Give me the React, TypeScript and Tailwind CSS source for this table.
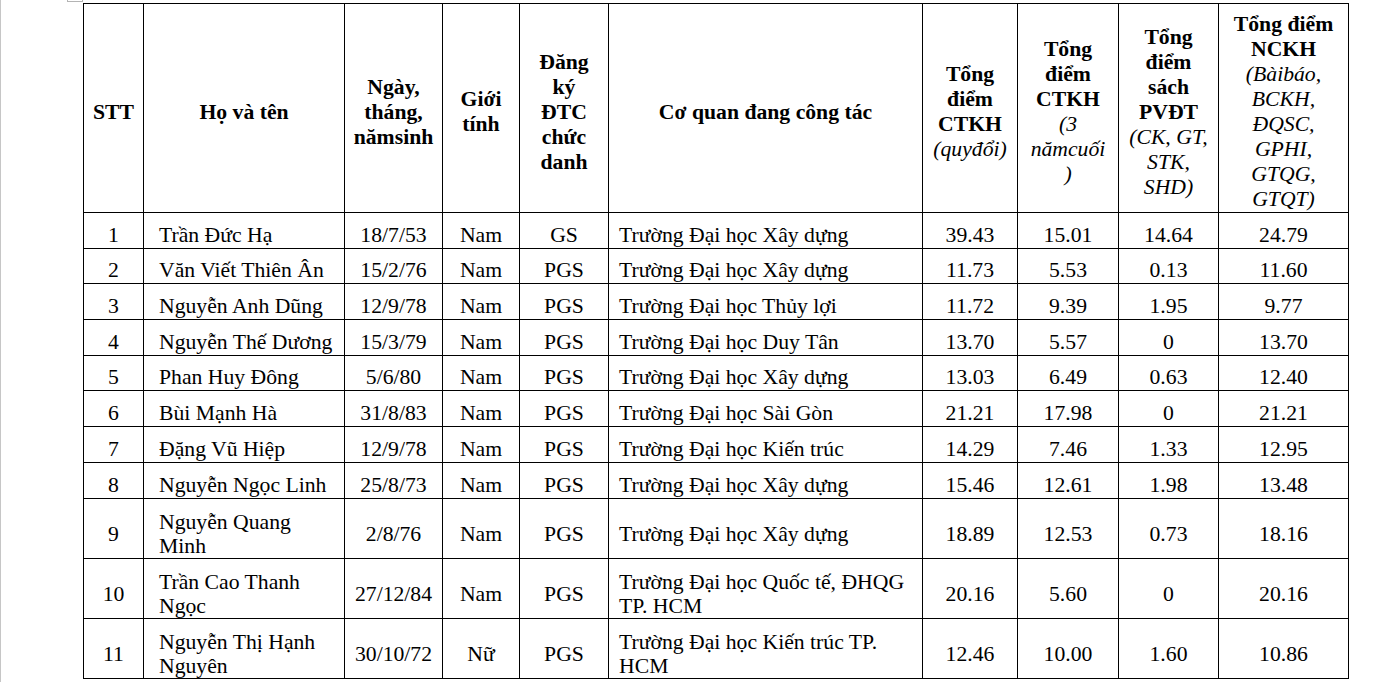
import React from "react";

type Row = {
  stt: string;
  name: string[];
  dob: string;
  gender: string;
  title: string;
  org: string[];
  ctkh: string;
  ctkh3: string;
  pvdt: string;
  nckh: string;
};

const rows: Row[] = [
  { stt: "1", name: ["Trần Đức Hạ"], dob: "18/7/53", gender: "Nam", title: "GS", org: ["Trường Đại học Xây dựng"], ctkh: "39.43", ctkh3: "15.01", pvdt: "14.64", nckh: "24.79" },
  { stt: "2", name: ["Văn Viết Thiên Ân"], dob: "15/2/76", gender: "Nam", title: "PGS", org: ["Trường Đại học Xây dựng"], ctkh: "11.73", ctkh3: "5.53", pvdt: "0.13", nckh: "11.60" },
  { stt: "3", name: ["Nguyễn Anh Dũng"], dob: "12/9/78", gender: "Nam", title: "PGS", org: ["Trường Đại học Thủy lợi"], ctkh: "11.72", ctkh3: "9.39", pvdt: "1.95", nckh: "9.77" },
  { stt: "4", name: ["Nguyễn Thế Dương"], dob: "15/3/79", gender: "Nam", title: "PGS", org: ["Trường Đại học Duy Tân"], ctkh: "13.70", ctkh3: "5.57", pvdt: "0", nckh: "13.70" },
  { stt: "5", name: ["Phan Huy Đông"], dob: "5/6/80", gender: "Nam", title: "PGS", org: ["Trường Đại học Xây dựng"], ctkh: "13.03", ctkh3: "6.49", pvdt: "0.63", nckh: "12.40" },
  { stt: "6", name: ["Bùi Mạnh Hà"], dob: "31/8/83", gender: "Nam", title: "PGS", org: ["Trường Đại học Sài Gòn"], ctkh: "21.21", ctkh3: "17.98", pvdt: "0", nckh: "21.21" },
  { stt: "7", name: ["Đặng Vũ Hiệp"], dob: "12/9/78", gender: "Nam", title: "PGS", org: ["Trường Đại học Kiến trúc"], ctkh: "14.29", ctkh3: "7.46", pvdt: "1.33", nckh: "12.95" },
  { stt: "8", name: ["Nguyễn Ngọc Linh"], dob: "25/8/73", gender: "Nam", title: "PGS", org: ["Trường Đại học Xây dựng"], ctkh: "15.46", ctkh3: "12.61", pvdt: "1.98", nckh: "13.48" },
  { stt: "9", name: ["Nguyễn Quang", "Minh"], dob: "2/8/76", gender: "Nam", title: "PGS", org: ["Trường Đại học Xây dựng"], ctkh: "18.89", ctkh3: "12.53", pvdt: "0.73", nckh: "18.16" },
  { stt: "10", name: ["Trần Cao Thanh", "Ngọc"], dob: "27/12/84", gender: "Nam", title: "PGS", org: ["Trường Đại học Quốc tế, ĐHQG", "TP. HCM"], ctkh: "20.16", ctkh3: "5.60", pvdt: "0", nckh: "20.16" },
  { stt: "11", name: ["Nguyễn Thị Hạnh", "Nguyên"], dob: "30/10/72", gender: "Nữ", title: "PGS", org: ["Trường Đại học Kiến trúc TP.", "HCM"], ctkh: "12.46", ctkh3: "10.00", pvdt: "1.60", nckh: "10.86" },
];

const Lines = ({ lines }: { lines: React.ReactNode[] }) => (
  <>
    {lines.map((l, i) => (
      <div key={i}>{l}</div>
    ))}
  </>
);

// italic part of a header, e.g. "(quyđổi)"
const It = ({ children }: { children: React.ReactNode }) => (
  <span className="italic font-normal font-['Liberation_Serif','DejaVu_Serif',serif]">{children}</span>
);

const th = "border border-black text-center align-middle font-bold px-0 pt-[8px] pb-0";
// single-line rows sit on the bottom edge, the two-line rows are centred
const tdShort = "border border-black align-bottom px-0 pt-0 pb-0";
const tdTall = "border border-black align-middle px-0 pt-[11px] pb-0 leading-[24px]";

export default function App() {
  return (
    <div className="relative min-h-[682px] bg-white border-l border-[#c6c6c6] text-black font-['Liberation_Serif','Times_New_Roman',serif] text-[21.7px] leading-[25px]">
      {/* corner mark */}
      <div className="absolute left-[66px] top-[-2px] w-[16px] h-[4px] border border-[#b4b4b4]" />
      <div className="pt-[3px] pl-[82px]">
        <table className="border-collapse table-fixed w-[1265px]">
          <colgroup>
            <col className="w-[60px]" />
            <col className="w-[201px]" />
            <col className="w-[98px]" />
            <col className="w-[77px]" />
            <col className="w-[89px]" />
            <col className="w-[314px]" />
            <col className="w-[95px]" />
            <col className="w-[101px]" />
            <col className="w-[100px]" />
            <col className="w-[130px]" />
          </colgroup>
          <thead>
            <tr className="h-[209px]">
              <th className={th}>STT</th>
              <th className={th}>Họ và tên</th>
              <th className={th}>
                <Lines lines={["Ngày,", "tháng,", "nămsinh"]} />
              </th>
              <th className={th}>
                <Lines lines={["Giới", "tính"]} />
              </th>
              <th className={th}>
                <Lines lines={["Đăng", "ký", "ĐTC", "chức", "danh"]} />
              </th>
              <th className={th}>Cơ quan đang công tác</th>
              <th className={th}>
                <Lines lines={["Tổng", "điểm", "CTKH", <It>(quyđổi)</It>]} />
              </th>
              <th className={th}>
                <Lines
                  lines={["Tổng", "điểm", "CTKH", <It>(3</It>, <It>nămcuối</It>, <It>)</It>]}
                />
              </th>
              <th className={th}>
                <Lines
                  lines={["Tổng", "điểm", "sách", "PVĐT", <It>(CK, GT,</It>, <It>STK,</It>, <It>SHD)</It>]}
                />
              </th>
              <th className={th}>
                <Lines
                  lines={[
                    "Tổng điểm",
                    "NCKH",
                    <It>(Bàibáo,</It>,
                    <It>BCKH,</It>,
                    <It>ĐQSC,</It>,
                    <It>GPHI,</It>,
                    <It>GTQG,</It>,
                    <It>GTQT)</It>,
                  ]}
                />
              </th>
            </tr>
          </thead>
          <tbody>
            {rows.map((r) => {
              const tall = r.name.length > 1 || r.org.length > 1;
              const td = tall ? tdTall : tdShort;
              return (
                <tr key={r.stt} className={tall ? "h-[60px]" : "h-[35.7px]"}>
                  <td className={`${td} text-center`}>{r.stt}</td>
                  <td className={`${td} pl-[15px] text-left`}>
                    <Lines lines={r.name} />
                  </td>
                  <td className={`${td} text-center`}>{r.dob}</td>
                  <td className={`${td} text-center`}>{r.gender}</td>
                  <td className={`${td} text-center`}>{r.title}</td>
                  <td className={`${td} pl-[10px] text-left`}>
                    <Lines lines={r.org} />
                  </td>
                  <td className={`${td} text-center`}>{r.ctkh}</td>
                  <td className={`${td} text-center`}>{r.ctkh3}</td>
                  <td className={`${td} text-center`}>{r.pvdt}</td>
                  <td className={`${td} text-center`}>{r.nckh}</td>
                </tr>
              );
            })}
          </tbody>
        </table>
      </div>
    </div>
  );
}
